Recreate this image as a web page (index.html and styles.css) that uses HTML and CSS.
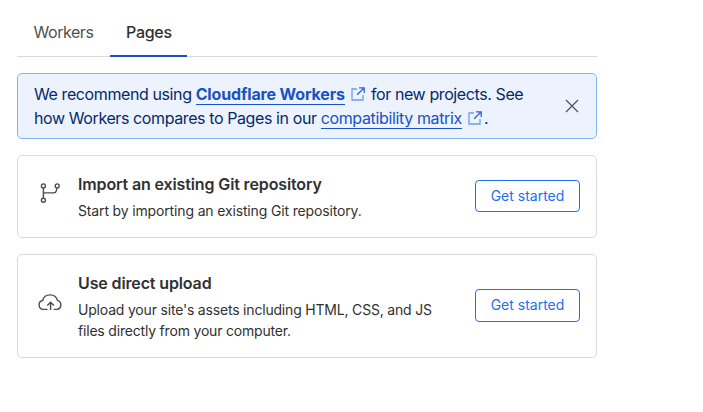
FILE: index.html
```html
<!DOCTYPE html>
<html lang="en">
<head>
<meta charset="utf-8">
<title>Workers &amp; Pages</title>
<link rel="stylesheet" href="styles.css">
</head>
<body>
<main class="panel">
  <nav class="tabs">
    <a class="tab">Workers</a>
    <a class="tab tab-active">Pages</a>
  </nav>

  <section class="banner">
    <p class="banner-text">We recommend using <a class="link link-strong">Cloudflare Workers</a><svg class="external" viewBox="0 0 14 14"><path d="M6 2H1v11h11V8"/><path class="arrow" d="M8 .8h5.2V6M13 1 6.2 7.8"/></svg>for new projects. See<br>how Workers compares to Pages in our <a class="link">compatibility matrix</a><svg class="external external-end" viewBox="0 0 14 14"><path d="M6 2H1v11h11V8"/><path class="arrow" d="M8 .8h5.2V6M13 1 6.2 7.8"/></svg>.</p>
    <svg class="close" viewBox="0 0 14 14"><path d="m1 1 12 12M13 1 1 13"/></svg>
  </section>

  <section class="card">
    <svg class="card-icon" viewBox="0 0 24 24"><circle cx="5.4" cy="4.9" r="2"/><circle cx="19.2" cy="4.9" r="2"/><circle cx="5.4" cy="19.2" r="2"/><path d="M5.4 7v10.1M5.4 11.9h10.4q2 0 2.5-2l.7-3"/></svg>
    <div class="card-body">
      <h2 class="card-title">Import an existing Git repository</h2>
      <p class="card-text">Start by importing an existing Git repository.</p>
    </div>
    <button class="button">Get started</button>
  </section>

  <section class="card card-tall">
    <svg class="card-icon" viewBox="0 0 24 24"><path d="M9.500 19.400H5.300a4.500 4.500 0 0 1-.6-8.900C5.500 7.200 8.500 4.900 12 4.900c3.700 0 6.600 2.200 7.400 5.500a4.600 4.600 0 0 1-.5 9H15.700M12.600 20v-7.600M9.300 15.600l3.300-3.300 3.300 3.300"/></svg>
    <div class="card-body">
      <h2 class="card-title">Use direct upload</h2>
      <p class="card-text card-text-long">Upload your site's assets including HTML, CSS, and JS<br>files directly from your computer.</p>
    </div>
    <button class="button button-tall">Get started</button>
  </section>
</main>
</body>
</html>
```
FILE: styles.css
```css
* { box-sizing: border-box; }
body {
  margin: 0;
  background: #fff;
  color: #313131;
  font-family: Inter, "Liberation Sans", sans-serif;
  font-size: 16px;
}
h2, p { margin: 0; }
svg { display: block; flex: none; fill: none; overflow: visible; }
.panel { width: 580px; margin-left: 17px; padding-top: 9px; }
.tabs {
  display: flex;
  height: 48px;
  border-bottom: 1px solid #d9d9d9;
}
.tab {
  width: 93px;
  height: 48px;
  padding-left: 16.500px;
  line-height: 47px;
  letter-spacing: -0.440px;
  color: #4f4f4f;
}
.tab-active {
  width: 77px;
  padding-left: 16px;
  border-bottom: 2px solid #1a51bd;
  color: #313131;
  font-weight: 500;
  letter-spacing: -0.300px;
}
.banner {
  display: flex;
  align-items: center;
  justify-content: space-between;
  height: 66px;
  margin-top: 16px;
  padding: 0 17px 0 16px;
  border: 1px solid #82b3f8;
  border-radius: 5px;
  background: #ecf3fe;
  color: #06296b;
}
.banner-text { line-height: 24px; letter-spacing: -0.400px; white-space: nowrap; }
.link { color: #1a51c4; border-bottom: 1px solid #1a51c4; letter-spacing: -0.360px; }
.link-strong { font-weight: 700; letter-spacing: -0.140px; }
.external {
  display: inline-block;
  width: 14px;
  height: 14px;
  margin: 0 6px;
  vertical-align: -1px;
  stroke: #709de8;
  stroke-width: 1.300;
}
.external-end { margin-right: 2px; }
.arrow { stroke: #2b66d1; }
.close { width: 14px; height: 14px; stroke: #4c5057; stroke-width: 1.200; }
.card {
  display: flex;
  align-items: center;
  height: 83px;
  margin-top: 16px;
  padding: 0 16px 0 20px;
  border: 1px solid #d9d9d9;
  border-radius: 5px;
}
.card-tall { height: 104px; }
.card-icon { width: 24px; height: 24px; margin: -8px 16px 0 0; stroke: #4c4c4c; stroke-width: 1.400; }
.card-body { flex: 1; white-space: nowrap; }
.card-title { font-size: 16px; font-weight: 600; line-height: 24px; letter-spacing: -0.130px; }
.card-text { margin-top: 4px; font-size: 14px; line-height: 21px; letter-spacing: -0.150px; }
.card-text-long { letter-spacing: -0.190px; }
.button {
  width: 105px;
  height: 32px;
  margin-bottom: 2px;
  padding: 0 0 1px;
  border: 1px solid #226ff5;
  border-radius: 4px;
  background: #fff;
  color: #226ff5;
  font: 14px Inter, "Liberation Sans", sans-serif;
}
.button-tall { height: 33px; }
```
